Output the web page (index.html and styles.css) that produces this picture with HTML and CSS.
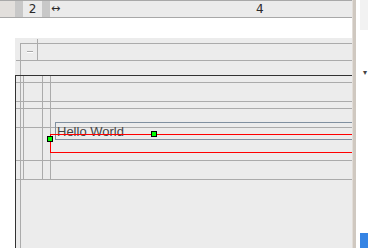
FILE: index.html
```html
<!DOCTYPE html>
<html>
<head>
<meta charset="utf-8">
<link rel="stylesheet" href="styles.css">
</head>
<body>
<div class="app">
  <div class="main">
    <div class="ruler">
      <div class="rc rc-corner"></div>
      <div class="rc rc-sep"></div>
      <div class="rc rc-num">2</div>
      <div class="rc rc-sep2"></div>
      <div class="rc rc-wide"><span class="arrows">↔</span><span class="four">4</span></div>
    </div>
    <div class="gap"></div>
    <div class="canvas">
      <div class="ln h g" style="top:5px;left:5px"></div>
      <div class="ln v g" style="left:22px;top:1px;height:22px"></div>
      <div class="ln h g" style="top:22px;left:1px"></div>
      <div class="ln v g" style="left:5px;top:5px;height:205px"></div>
      <div class="dash"></div>
      <div class="ln h dark" style="top:37px;left:0"></div>
      <div class="ln v dark" style="left:0;top:37px;height:173px"></div>

      <div class="ln h g" style="top:44px;left:1px"></div>
      <div class="ln h g" style="top:63px;left:1px"></div>
      <div class="ln h g" style="top:70px;left:1px"></div>
      <div class="ln h g" style="top:89px;left:1px"></div>
      <div class="ln h g" style="top:122px;left:1px"></div>
      <div class="ln h g" style="top:141px;left:1px"></div>
      <div class="ln v g" style="left:8px;top:38px;height:104px"></div>
      <div class="ln v g" style="left:27px;top:38px;height:104px"></div>
      <div class="ln v g" style="left:35px;top:38px;height:104px"></div>

      <div class="textbox"><span class="label">Hello World</span></div>
      <div class="sel"></div>
      <div class="handle" style="left:32px;top:98px"></div>
      <div class="handle" style="left:136px;top:93px"></div>
    </div>
  </div>
  <div class="side">
    <div class="bar"></div>
    <div class="track">
      <div class="top"></div>
      <div class="mid"><span class="tri">▾</span></div>
      <div class="blue"></div>
    </div>
  </div>
</div>
</body>
</html>
```
FILE: styles.css
```css
html, body {
  margin: 0;
  padding: 0;
  background: #ffffff;
}
body {
  width: 368px;
  height: 248px;
  overflow: hidden;
  font-family: "DejaVu Sans", "Liberation Sans", sans-serif;
}
.app {
  display: flex;
  width: 368px;
  height: 248px;
}
.main {
  width: 352px;
  display: flex;
  flex-direction: column;
}
.ruler {
  display: flex;
  height: 16px;
  border-top: 1px solid #a8a8a8;
  border-bottom: 1px solid #a8a8a8;
  font-size: 12px;
  color: #2a2a2a;
}
.rc {
  height: 16px;
  line-height: 16px;
}
.rc-corner { width: 15px; background: #e2dfdc; }
.rc-sep { width: 8px; background: #c8c8c8; }
.rc-num { width: 19px; background: #ebebeb; text-align: center; }
.rc-sep2 { width: 8px; background: #c8c8c8; }
.rc-wide {
  flex: 1;
  background: #ebebeb;
  display: flex;
  align-items: center;
}
.arrows { font-size: 11px; margin-left: 1px; width: 205px; }
.gap { height: 20px; }
.canvas {
  position: relative;
  margin-left: 15px;
  flex: 1;
  background: #ececec;
}
.ln { position: absolute; }
.h { height: 1px; right: 0; }
.v { width: 1px; }
.g { background: #ababab; }
.dark { background: #333333; }
.dash {
  position: absolute;
  left: 12px;
  top: 13px;
  width: 6px;
  height: 1px;
  background: #a8a8a8;
  border-bottom: 1px solid #ffffff;
}
.textbox {
  position: absolute;
  left: 40px;
  top: 84px;
  right: 0;
  height: 16px;
  border: 1px solid #8090a0;
  border-right: none;
}
.label {
  position: absolute;
  left: 1px;
  top: 1px;
  font-family: "Liberation Sans", Arial, sans-serif;
  font-size: 13px;
  line-height: 15px;
  color: #444444;
}
.sel {
  position: absolute;
  left: 35px;
  top: 96px;
  right: 0;
  height: 17px;
  border: 1px solid #ff0000;
  border-right: none;
}
.handle {
  position: absolute;
  width: 4px;
  height: 4px;
  background: #00ff00;
  border: 1px solid #000000;
}
.side {
  width: 16px;
  display: flex;
}
.bar {
  width: 3px;
  border-left: 1px solid #e2ddd8;
  background: #cfc8c0;
}
.track {
  flex: 1;
  display: flex;
  flex-direction: column;
  border-left: 4px solid #ffffff;
}
.top { height: 30px; background: #f2f2f2; }
.mid {
  flex: 1;
  background: #ffffff;
  position: relative;
}
.tri {
  position: absolute;
  left: 3px;
  top: 38px;
  font-size: 8px;
  color: #444;
}
.blue { height: 15px; background: #3584e4; }
```
